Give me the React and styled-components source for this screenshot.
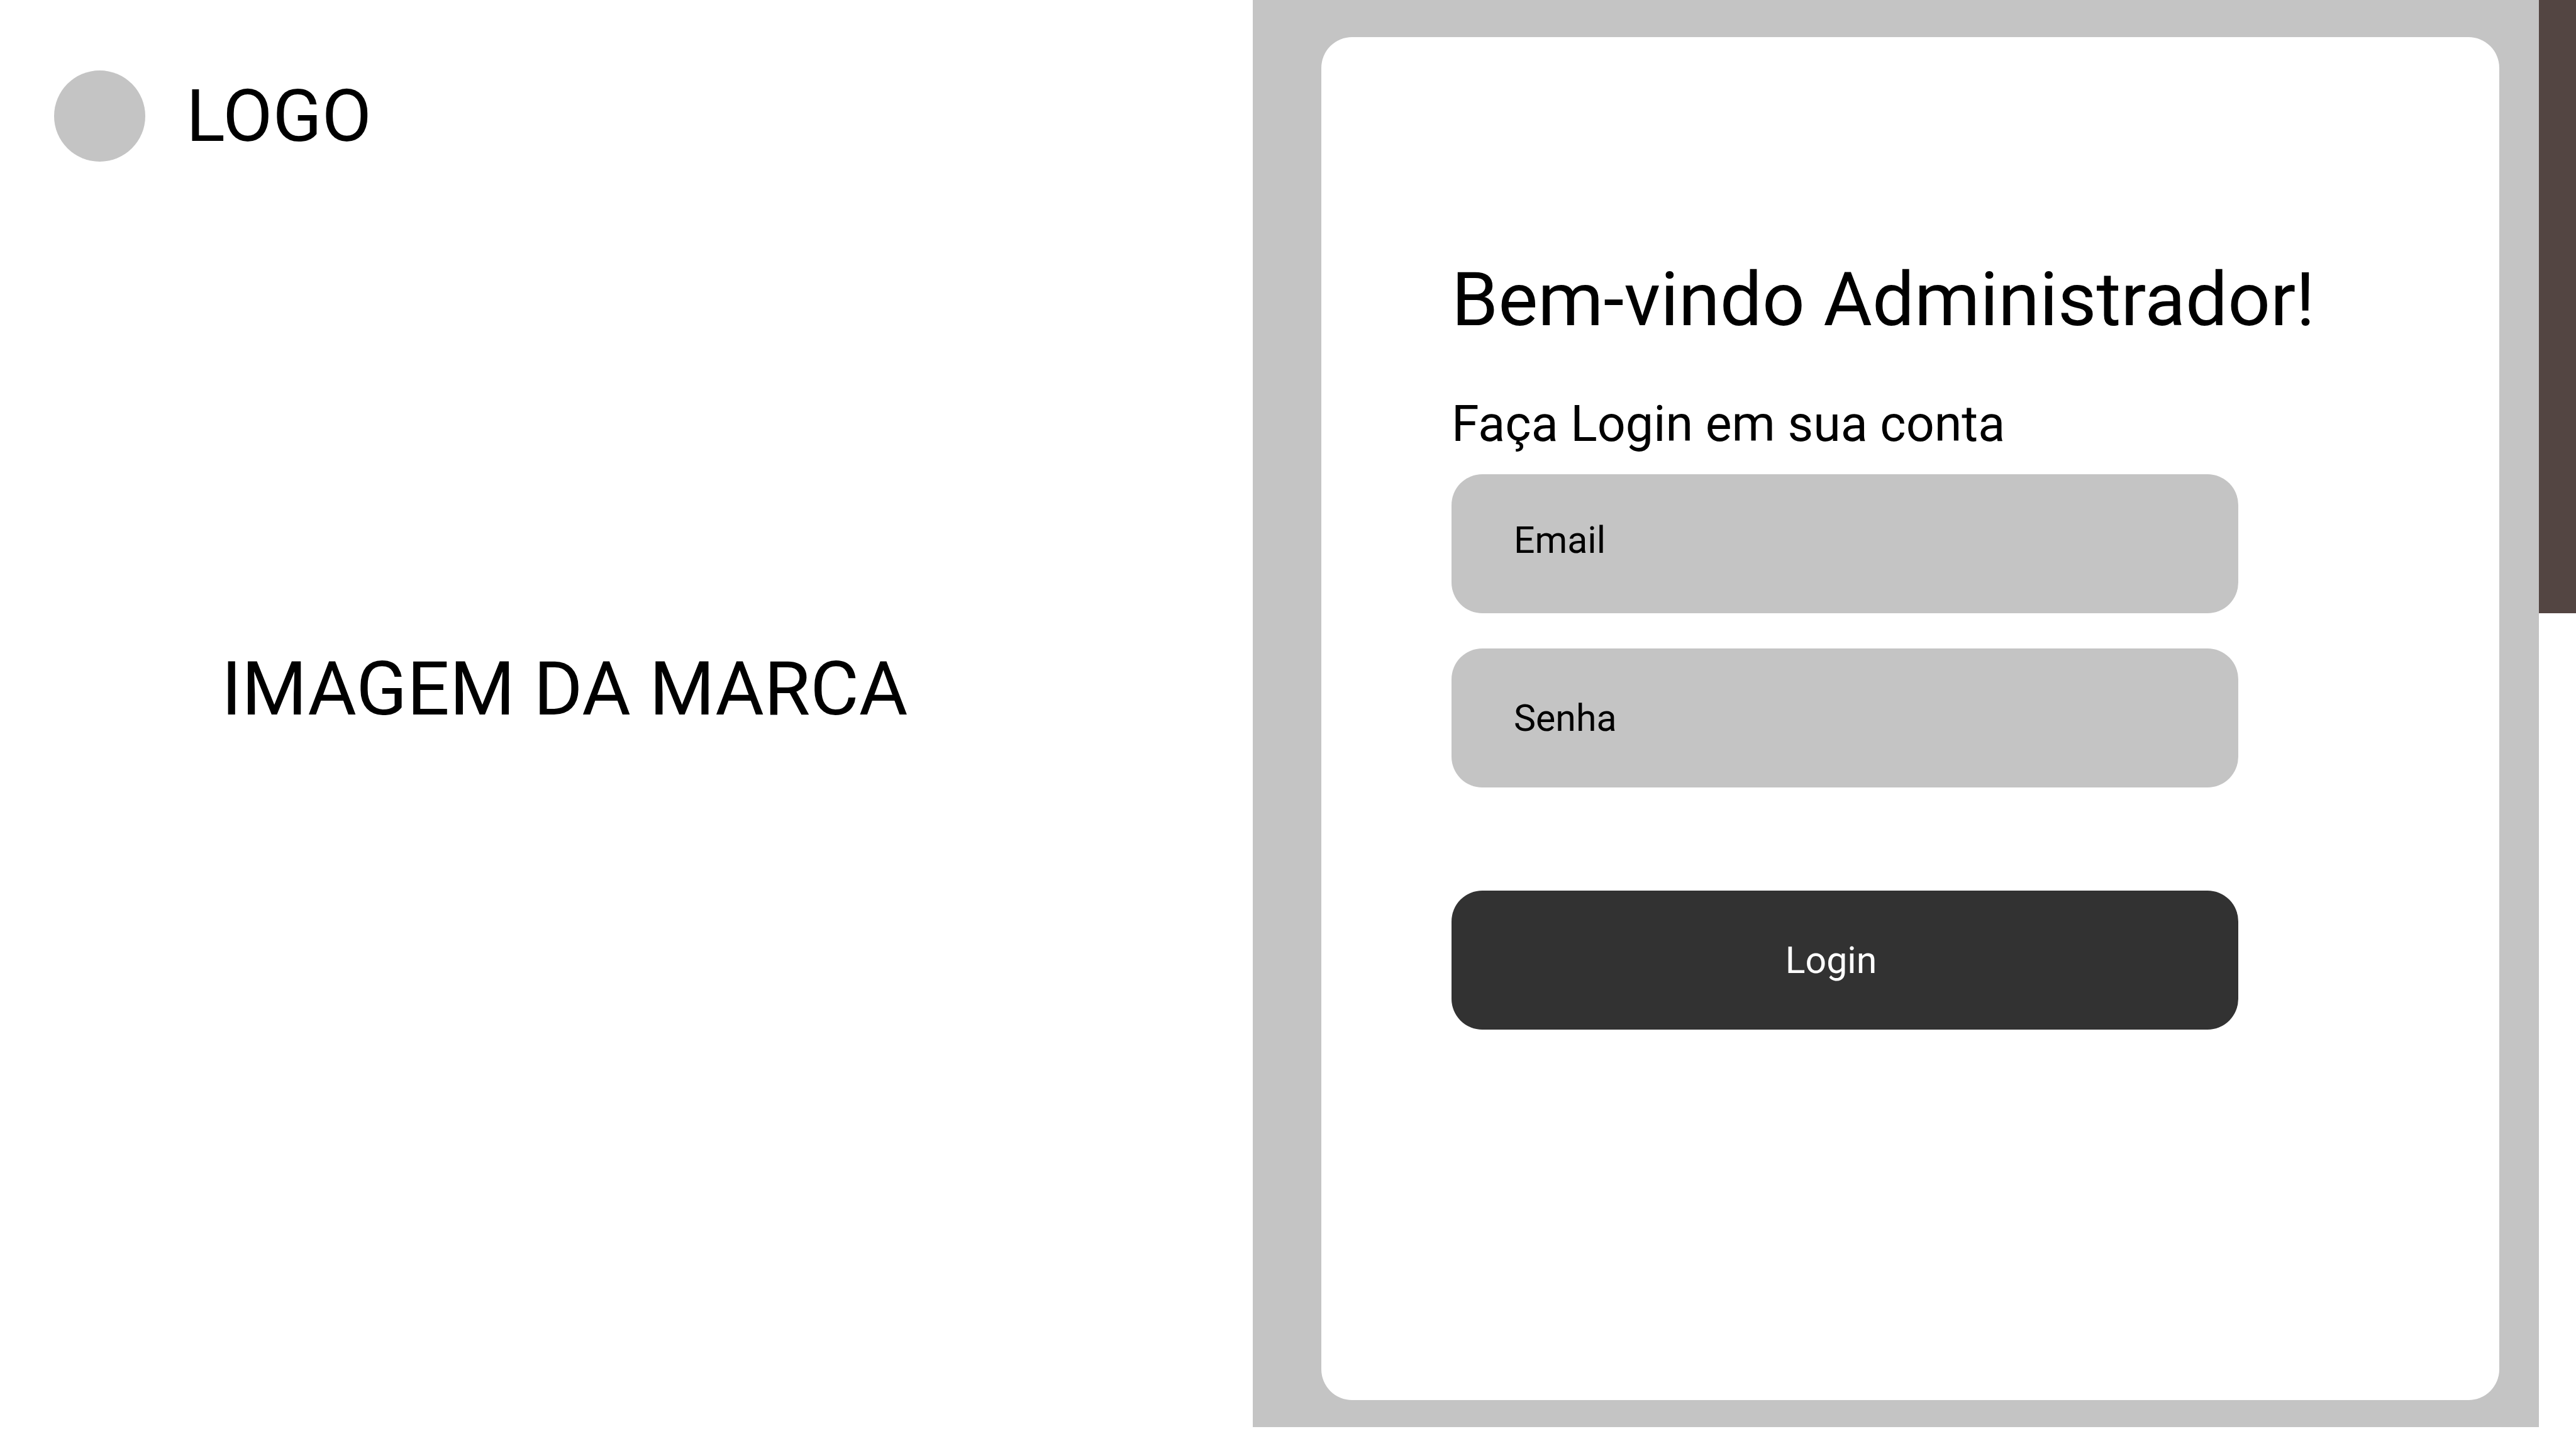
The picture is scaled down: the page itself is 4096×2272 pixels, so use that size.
import React from "react";
import styled, { createGlobalStyle } from "styled-components";

const GlobalStyle = createGlobalStyle`
  *, *::before, *::after { box-sizing: border-box; }
  body {
    margin: 0;
    background: #ffffff;
    color: #000000;
    font-family: Roboto, "Liberation Sans", sans-serif;
  }
`;

const Page = styled.div`
  display: grid;
  grid-template-columns: 1992fr 2045fr 59fr;
  min-height: 100vh;
`;

const Brand = styled.section`
  display: flex;
  flex-direction: column;
  align-items: flex-start;
  gap: 769px;
  padding: 112px 86px;
`;

const Logo = styled.header`
  display: flex;
  align-items: center;
  gap: 65px;
`;

const LogoMark = styled.span`
  width: 145px;
  height: 145px;
  border-radius: 50%;
  background: #c4c4c4;
`;

const LogoName = styled.span`
  font-size: 115px;
  line-height: 140px;
`;

const BrandImage = styled.p`
  margin: 0;
  padding-left: 266px;
  font-size: 119px;
  line-height: 140px;
  white-space: nowrap;
`;

const Panel = styled.main`
  display: flex;
  margin-bottom: 3px;
  padding: 59px 63px 43px 109px;
  background: #c4c4c4;
`;

const Card = styled.div`
  flex: 1;
  padding: 348px 207px 59px;
  border-radius: 49px;
  background: #ffffff;
`;

const Title = styled.h1`
  margin: 0 0 81px;
  font-size: 119px;
  font-weight: 400;
  line-height: 140px;
  white-space: nowrap;
`;

const Subtitle = styled.h2`
  margin: 0 0 34px;
  font-size: 79px;
  font-weight: 400;
  line-height: 92px;
`;

const Form = styled.form`
  display: flex;
  flex-direction: column;
  max-width: 1251px;
`;

const Fields = styled.div`
  display: flex;
  flex-direction: column;
  gap: 56px;
  margin-bottom: 164px;
`;

const Field = styled.input`
  width: 100%;
  height: 221px;
  padding: 0 99px ${(p) => (p.$raised ? "12px" : "0")};
  border: 0;
  border-radius: 49px;
  background: #c4c4c4;
  color: #000000;
  font: 400 59px Roboto, "Liberation Sans", sans-serif;

  &::placeholder {
    color: #000000;
    opacity: 1;
  }
`;

const SubmitButton = styled.button`
  height: 221px;
  padding: 0 44px 0 0;
  border: 0;
  border-radius: 49px;
  background: #323232;
  color: #ffffff;
  font: 400 59px Roboto, "Liberation Sans", sans-serif;
  cursor: pointer;
`;

const Accent = styled.div`
  height: 975px;
  background: #534542;
`;

export default function App() {
  return (
    <>
      <GlobalStyle />
      <Page>
        <Brand>
          <Logo>
            <LogoMark />
            <LogoName>LOGO</LogoName>
          </Logo>
          <BrandImage>IMAGEM DA MARCA</BrandImage>
        </Brand>
        <Panel>
          <Card>
            <Title>Bem-vindo Administrador!</Title>
            <Subtitle>Faça Login em sua conta</Subtitle>
            <Form onSubmit={(e) => e.preventDefault()}>
              <Fields>
                <Field type="email" name="email" aria-label="Email" placeholder="Email" $raised />
                <Field type="password" name="senha" aria-label="Senha" placeholder="Senha" />
              </Fields>
              <SubmitButton type="submit">Login</SubmitButton>
            </Form>
          </Card>
        </Panel>
        <Accent />
      </Page>
    </>
  );
}
